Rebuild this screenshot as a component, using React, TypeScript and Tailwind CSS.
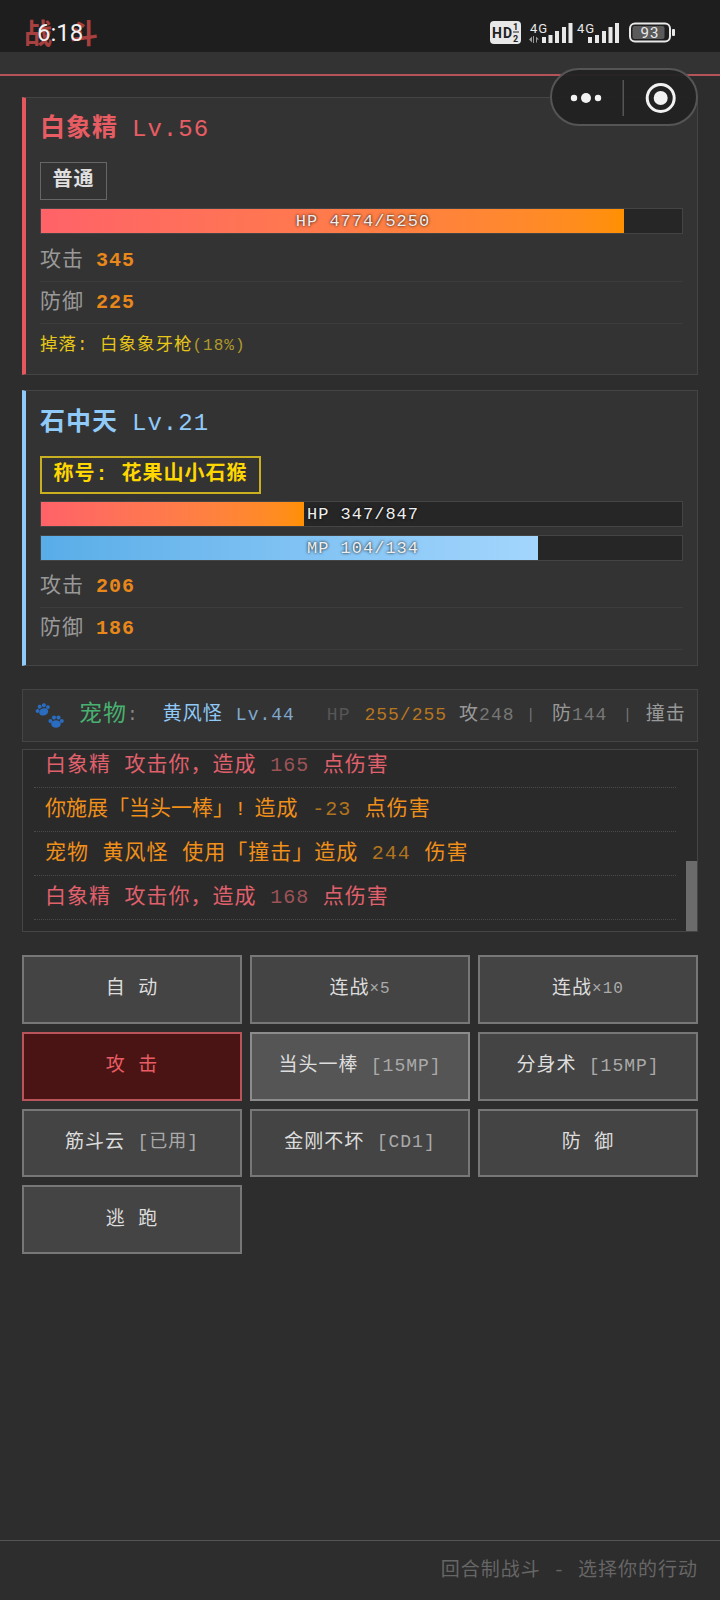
import React from 'react';

const StatusIcons: React.FC = () => (
  <svg width="196" height="26" viewBox="490 21 196 26" className="shrink-0">
    <rect x="490" y="22" width="31" height="23" rx="4" fill="#e8e8e8" />
    <text x="492" y="39" fontSize="14" fontWeight="700" fill="#222" fontFamily="Roboto, sans-serif">HD</text>
    <text x="513" y="31" fontSize="9" fontWeight="700" fill="#222" fontFamily="Roboto, sans-serif">1</text>
    <text x="513" y="43" fontSize="9" fontWeight="700" fill="#222" fontFamily="Roboto, sans-serif">2</text>
    <rect x="513" y="32.5" width="6" height="1" fill="#222" />
    <text x="530" y="34" fontSize="13" fill="#e8e8e8" fontFamily="Roboto, sans-serif">4G</text>
    <text x="577" y="34" fontSize="13" fill="#e8e8e8" fontFamily="Roboto, sans-serif">4G</text>
    <path d="M529 40.5l3-3v6zM533 37h1v7h-1zM536 37.5l3 3h-2v3h-1z" fill="#999" />
    {[[542, 38], [548.5, 36], [555, 32], [562, 28], [568.5, 24]].map(([x, y]) => (
      <rect key={x} x={x} y={y} width="4" height={44 - y} fill="#e8e8e8" />
    ))}
    {[[588, 38], [595, 36], [602, 32], [608.5, 28], [615, 24]].map(([x, y]) => (
      <rect key={x} x={x} y={y} width="4" height={44 - y} fill="#e8e8e8" />
    ))}
    <rect x="630" y="24.5" width="40" height="18" rx="5" fill="none" stroke="#e8e8e8" strokeWidth="2" />
    <rect x="632.5" y="27" width="32" height="13" rx="2" fill="#5a5a5a" />
    <rect x="672" y="30" width="3" height="7" rx="1" fill="#e8e8e8" />
    <text x="650" y="39" fontSize="15" fill="#e8e8e8" textAnchor="middle" fontFamily="Roboto, sans-serif">93</text>
  </svg>
);

const PawIcon: React.FC = () => (
  <svg width="30" height="28" viewBox="0 0 30 28" fill="#2a6cc0" className="shrink-0">
    <g transform="rotate(-20 8 8)">
      <ellipse cx="8" cy="10" rx="4.6" ry="3.6" />
      <circle cx="2.5" cy="7" r="1.9" />
      <circle cx="6" cy="3.8" r="2" />
      <circle cx="10.5" cy="3.8" r="2" />
      <circle cx="13.6" cy="7" r="1.9" />
    </g>
    <g transform="translate(13 12)">
      <ellipse cx="8" cy="10" rx="4.8" ry="3.8" />
      <circle cx="2.4" cy="7" r="2" />
      <circle cx="6" cy="3.6" r="2.1" />
      <circle cx="10.5" cy="3.6" r="2.1" />
      <circle cx="13.8" cy="7" r="2" />
    </g>
  </svg>
);

const Bar: React.FC<{ label: string; pct: number; mp?: boolean; className?: string }> = ({ label, pct, mp, className }) => (
  <div className={`relative h-[26px] bg-[#262626] border border-[#444] ${className ?? ''}`}>
    <div
      className={`h-full ${mp ? 'bg-gradient-to-r from-[#58ade8] to-[#a3d6fd]' : 'bg-gradient-to-r from-[#ff6268] to-[#ff9000]'}`}
      style={{ width: `${pct}%` }}
    />
    <div className="absolute inset-0 flex items-center justify-center pl-[3px] text-[17px] leading-none text-[#eee] [text-shadow:0_0_3px_#000]">
      {label}
    </div>
  </div>
);

const Stat: React.FC<{ label: string; value: string }> = ({ label, value }) => (
  <div className="h-[42px] flex items-center border-b border-[#3c3c3c]">
    <span className="text-[21px] text-[#999] mr-[12px]">{label}</span>
    <span className="text-[20px] font-bold text-[#e8871a]">{value}</span>
  </div>
);

const LogRow: React.FC<{ tone: 'red' | 'orange'; before: React.ReactNode; num: string; after: string }> = ({ tone, before, num, after }) => (
  <div
    className={`h-[44px] shrink-0 flex items-center pl-[11px] border-b border-dotted border-[#4a4a4a] text-[21px] whitespace-pre ${
      tone === 'red' ? 'text-[#e0606c]' : 'text-[#f0901a]'
    }`}
  >
    {before}
    <span className={`text-[20px] ${tone === 'red' ? 'text-[#9c5358]' : 'text-[#b0741e]'}`}>{num}</span>
    {after}
  </div>
);

const ActionButton: React.FC<{ label: string; note?: string; small?: boolean; variant?: 'attack' | 'hover' }> = ({ label, note, small, variant }) => (
  <button
    className={`h-[68.8px] border-2 text-[19px] flex items-center justify-center whitespace-pre ${
      variant === 'attack'
        ? 'bg-[#4a1414] border-[#b8545a] text-[#e85d63]'
        : variant === 'hover'
          ? 'bg-[#555] border-[#8c8c8c] text-[#ddd]'
          : 'bg-[#444] border-[#777] text-[#ddd]'
    }`}
  >
    {label}
    {note && <span className={`text-[#aaa] ${small ? 'text-[16px]' : 'text-[18px]'}`}>{note}</span>}
  </button>
);

export default function App() {
  return (
    <div className="relative h-[1600px] w-[720px] overflow-hidden flex flex-col bg-[#2d2d2d] tracking-[1px] [font-family:'Liberation_Mono','Noto_Sans_CJK_SC',monospace]">
      <div className="h-[52px] bg-[#1e1e1e] shrink-0 flex items-center justify-between pt-[14px] pl-[37px] pr-[34px]">
        <span className="relative z-10 text-[24px] tracking-normal text-[#f2f2f2] [font-family:Roboto,sans-serif]">6:18</span>
        <StatusIcons />
      </div>
      <div className="absolute left-[24px] top-[16px] text-[28px] font-bold tracking-[18px] text-[#a8403f]">战斗</div>

      <div className="h-[24px] shrink-0 bg-[#333] border-b-2 border-[#b5525a]" />

      {/* capsule */}
      <div className="absolute left-[550px] top-[68px] w-[148px] h-[58px] rounded-full bg-[#222]/95 border-2 border-[#555] flex items-center">
        <svg width="144" height="54" viewBox="0 0 144 54">
          <circle cx="22" cy="28" r="3.2" fill="#f2f2f2" />
          <circle cx="34" cy="28" r="5" fill="#f2f2f2" />
          <circle cx="46" cy="28" r="3.2" fill="#f2f2f2" />
          <rect x="70.5" y="10" width="1.5" height="36" fill="#555" />
          <circle cx="108.7" cy="28" r="13.5" fill="none" stroke="#f2f2f2" strokeWidth="3" />
          <circle cx="108.7" cy="28" r="7" fill="#f2f2f2" />
        </svg>
      </div>

      <div className="px-[22px] pt-[21px] flex flex-col">
        <section className="h-[278px] bg-[#333] border border-[#444] border-l-[4px] border-l-[#e4575d] pl-[14px] pr-[14px]">
          <div className="h-[64px] flex items-center">
            <span className="text-[25px] font-bold text-[#e85d63] mr-[14px]">白象精</span>
            <span className="text-[24px] text-[#e85d63]">Lv.56</span>
          </div>
          <div className="h-[38px] w-[67px] border border-[#666] flex items-center justify-center text-[20px] font-bold text-[#e0e0e0] pb-[1px]">普通</div>
          <Bar label="HP 4774/5250" pct={90.9} className="mt-[8px]" />
          <div className="pt-[6px]">
            <Stat label="攻击" value="345" />
            <Stat label="防御" value="225" />
          </div>
          <div className="h-[40px] flex items-center pt-[3px] text-[17.5px] text-[#e6c619] whitespace-pre">
            掉落: 白象象牙枪<span className="text-[16px] text-[#b09a2a]">(18%)</span>
          </div>
        </section>

        <section className="mt-[15px] h-[276px] bg-[#333] border border-[#444] border-l-[4px] border-l-[#90caf9] pl-[14px] pr-[14px]">
          <div className="h-[65px] flex items-center">
            <span className="text-[25px] font-bold text-[#90caf9] mr-[14px]">石中天</span>
            <span className="text-[24px] text-[#90caf9]">Lv.21</span>
          </div>
          <div className="h-[38px] w-[221px] border-2 border-[#c8b020] flex items-center justify-center text-[20px] font-bold text-[#ffd700] pb-[1px] whitespace-pre">称号: 花果山小石猴</div>
          <Bar label="HP 347/847" pct={41} className="mt-[7px]" />
          <Bar label="MP 104/134" pct={77.6} mp className="mt-[8px]" />
          <div className="pt-[5px]">
            <Stat label="攻击" value="206" />
            <Stat label="防御" value="186" />
          </div>
        </section>

        <section className="mt-[23px] h-[53px] bg-[#333] border border-[#444] flex items-center pl-[12px] whitespace-pre overflow-hidden">
          <PawIcon />
          <span className="ml-[14px] text-[23px] text-[#48b070]">宠物</span>
          <span className="text-[18px] text-[#888] mr-[14px]">:</span>
          <span className="text-[19px] ml-[10px] text-[#90caf9]">黄风怪</span>
          <span className="ml-[13px] text-[18px] text-[#7fa8cc]">Lv.44</span>
          <span className="ml-[32px] text-[18px] text-[#565656]">HP</span>
          <span className="ml-[14px] text-[18px] text-[#b8761f]">255/255</span>
          <span className="ml-[12px] text-[19px] text-[#999]">攻</span>
          <span className="text-[18px] text-[#777]">248</span>
          <span className="ml-[12px] text-[14px] text-[#777]">|</span>
          <span className="ml-[16px] text-[19px] text-[#999]">防</span>
          <span className="text-[18px] text-[#777]">144</span>
          <span className="ml-[16px] text-[14px] text-[#777]">|</span>
          <span className="ml-[13px] text-[19px] text-[#999]">撞击</span>
        </section>

        <section className="relative mt-[7px] h-[183px] bg-[#2a2a2a] border border-[#454545] flex flex-col justify-end overflow-hidden pl-[11px] pr-[21px] pb-[11px]">
          <LogRow tone="red" before="白象精 攻击你，造成 " num="165" after=" 点伤害" />
          <LogRow
            tone="orange"
            before={
              <>
                <span className="tracking-normal">你施展「当头一棒」</span>
                <span>!</span>
                <span className="ml-[7px]">造成 </span>
              </>
            }
            num="-23"
            after=" 点伤害"
          />
          <LogRow tone="orange" before="宠物 黄风怪 使用「撞击」造成 " num="244" after=" 伤害" />
          <LogRow tone="red" before="白象精 攻击你，造成 " num="168" after=" 点伤害" />
          <div className="absolute right-0 bottom-0 w-[11px] h-[70px] bg-[#6b6b6b]" />
        </section>

        <div className="mt-[23px] grid grid-cols-3 gap-[8px]">
          <ActionButton label="自 动" />
          <ActionButton label="连战" note="×5" small />
          <ActionButton label="连战" note="×10" small />
          <ActionButton label="攻 击" variant="attack" />
          <ActionButton label="当头一棒 " note="[15MP]" variant="hover" />
          <ActionButton label="分身术 " note="[15MP]" />
          <ActionButton label="筋斗云 " note="[已用]" />
          <ActionButton label="金刚不坏 " note="[CD1]" />
          <ActionButton label="防 御" />
          <ActionButton label="逃 跑" />
        </div>
      </div>

      <footer className="mt-auto h-[60px] shrink-0 border-t border-[#555] flex items-center justify-end pr-[22px] pt-[2px] text-[19px] text-[#666] whitespace-pre">
        回合制战斗 - 选择你的行动
      </footer>
    </div>
  );
}
